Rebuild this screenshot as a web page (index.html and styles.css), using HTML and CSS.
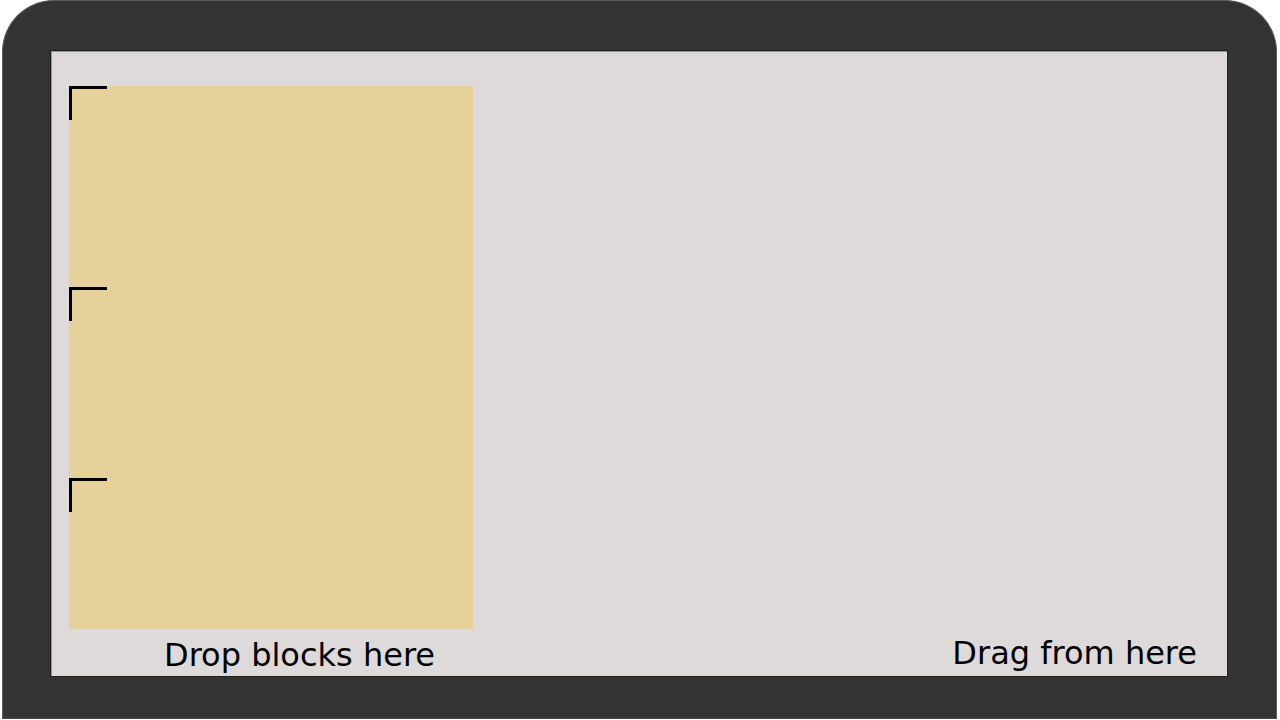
FILE: index.html
```html
<!DOCTYPE html>
<html>
<head>
<meta charset="utf-8">
<link rel="stylesheet" href="styles.css">
</head>
<body>
<div class="frame">
  <div class="screen">
    <div class="drop-col">
      <div class="drop-zone">
        <div class="slot slot-1"><span class="marker"></span></div>
        <div class="slot slot-2"><span class="marker"></span></div>
        <div class="slot slot-3"><span class="marker"></span></div>
      </div>
      <div class="label drop-label">Drop blocks here</div>
    </div>
    <div class="drag-col">
      <div class="label drag-label">Drag from here</div>
    </div>
  </div>
</div>
</body>
</html>
```

FILE: styles.css
```css
html, body {
  margin: 0;
  padding: 0;
  background: #ffffff;
  width: 1280px;
  height: 720px;
  overflow: hidden;
}

.frame {
  box-sizing: border-box;
  margin-left: 2px;
  width: 1275px;
  height: 719px;
  background: #333333;
  border: 1px solid #5a5a5a;
  border-bottom-color: #4a4a4a;
  border-radius: 52px 52px 0 0;
  padding: 49px 0 0 47px;
}

.screen {
  box-sizing: border-box;
  width: 1178px;
  height: 627px;
  background: #dfdada;
  border: 1px solid #1f1f1f;
  box-shadow: inset 1px 1px 0 #9a9696;
  display: flex;
  font-family: "DejaVu Sans", sans-serif;
  color: #000;
}

.drop-col {
  display: flex;
  flex-direction: column;
  padding: 35px 0 0 18px;
}

.drop-zone {
  width: 404px;
  height: 543px;
  background: #e6d19b;
  display: flex;
  flex-direction: column;
}

.slot {
  flex: none;
}
.slot-1 { height: 201px; }
.slot-2 { height: 191px; }
.slot-3 { height: 151px; }

.marker {
  display: block;
  box-sizing: border-box;
  width: 38px;
  height: 34px;
  border-top: 3px solid #000;
  border-left: 3px solid #000;
}

.label {
  font-size: 32px;
  line-height: 37px;
  white-space: nowrap;
}

.drop-label {
  margin-top: 8px;
  padding-left: 95px;
}

.drag-col {
  flex: 1;
  display: flex;
  align-items: flex-start;
  justify-content: flex-end;
  padding: 584px 30px 0 0;
}
```
